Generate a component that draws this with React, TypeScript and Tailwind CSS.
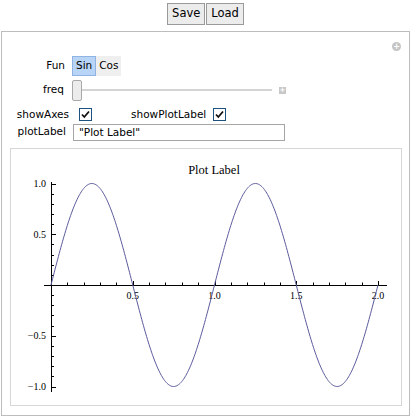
import React from 'react';

const font = { fontFamily: '"DejaVu Sans", Tahoma, sans-serif' };

// plot geometry, relative to the plot panel
const X0 = 40;
const Y0 = 136;
const SX = 163.5;
const SY = 101.5;

function sinePath() {
  const pts: string[] = [];
  for (let i = 0; i <= 400; i++) {
    const x = (i / 400) * 2;
    const px = X0 + x * SX;
    const py = Y0 - Math.sin(2 * Math.PI * x) * SY;
    pts.push(`${i === 0 ? 'M' : 'L'}${px.toFixed(2)},${py.toFixed(2)}`);
  }
  return pts.join(' ');
}

function Plot() {
  const xTicks = Array.from({ length: 21 }, (_, i) => i / 10);
  const yTicks = Array.from({ length: 21 }, (_, i) => -1 + i / 10);
  return (
    <svg width="390" height="256" className="block">
      <text x="203" y="25" textAnchor="middle" fontFamily='"Liberation Serif", serif' fontSize="12.5" fill="#000">
        Plot Label
      </text>
      {/* axes */}
      <line x1="33" y1={Y0 + 0.5} x2="376" y2={Y0 + 0.5} stroke="#000" strokeWidth="1" />
      <line x1={X0 + 0.5} y1="33" x2={X0 + 0.5} y2="243" stroke="#000" strokeWidth="1" />
      {xTicks.map((t, i) => {
        if (i === 0) return null;
        const px = Math.round(X0 + t * SX) + 0.5;
        const major = i % 5 === 0;
        return <line key={'x' + i} x1={px} y1={Y0} x2={px} y2={Y0 - (major ? 4 : 2.5)} stroke="#000" strokeWidth="1" />;
      })}
      {yTicks.map((t, i) => {
        if (i === 10) return null;
        const py = Math.round(Y0 - t * SY) + 0.5;
        const major = i % 5 === 0;
        return <line key={'y' + i} x1={X0} y1={py} x2={X0 + (major ? 5 : 3)} y2={py} stroke="#000" strokeWidth="1" />;
      })}
      {['0.5', '1.0', '1.5', '2.0'].map((l, i) => (
        <text key={l} x={X0 + (i + 1) * 0.5 * SX} y="150" textAnchor="middle" fontFamily='"Liberation Serif", serif' fontSize="10" fill="#000">
          {l}
        </text>
      ))}
      {[
        ['1.0', 1],
        ['0.5', 0.5],
        ['\u22120.5', -0.5],
        ['\u22121.0', -1],
      ].map(([l, v]) => (
        <text key={l as string} x="35" y={Y0 - (v as number) * SY + 3.5} textAnchor="end" fontFamily='"Liberation Serif", serif' fontSize="10" fill="#000">
          {l}
        </text>
      ))}
      <path d={sinePath()} fill="none" stroke="#5a5a9c" strokeWidth="1" />
    </svg>
  );
}

function Check() {
  return (
    <span className="flex h-[13px] w-[13px] items-center justify-center border border-[#1c5180] bg-white">
      <svg width="9" height="9" viewBox="0 0 9 9">
        <path d="M1 4.5 L3.3 7 L8 1.5" fill="none" stroke="#111" strokeWidth="1.8" />
      </svg>
    </span>
  );
}

function App() {
  return (
    <div className="h-[419px] w-[411px] bg-white text-[10.5px] text-black" style={font}>
      {/* Save / Load */}
      <div className="flex justify-center gap-px pt-[3px]">
        <button className="h-[22px] border border-[#9a9a9a] bg-[#ececec] px-[4px] text-[11.5px] leading-none">Save</button>
        <button className="h-[22px] border border-[#9a9a9a] bg-[#ececec] px-[4px] text-[11.5px] leading-none">Load</button>
      </div>

      {/* Manipulate panel */}
      <div className="relative ml-px mt-[6px] h-[385px] w-[409px] border border-[#bdbdbd] bg-white">
        <span className="absolute right-[8px] top-[10px] flex h-[9px] w-[9px] items-center justify-center rounded-full bg-[#c4c4c4]">
          <span className="text-[8px] font-bold leading-none text-white">+</span>
        </span>

        <div className="flex flex-col pt-[24px]">
          <div className="flex h-[20px] items-center">
            <span className="w-[63px] text-right">Fun</span>
            <div className="ml-[7px] flex h-[20px]">
              <span className="flex items-center border border-[#8fb4e3] bg-[#b8d4f6] px-[3px]">Sin</span>
              <span className="flex items-center bg-[#efefef] px-[3px]">Cos</span>
            </div>
          </div>

          <div className="mt-[3px] flex h-[22px] items-center">
            <span className="w-[62px] text-right">freq</span>
            <div className="ml-[8px] flex items-center">
              <span className="h-[21px] w-[10px] rounded-[2px] border border-[#a8a8a8] bg-[#ececec]" />
              <span className="h-[2px] w-[190px] bg-[#d4d4d4]" />
              <span className="ml-[7px] flex h-[7px] w-[7px] items-center justify-center bg-[#c8c8c8] text-[7px] font-bold leading-none text-white">+</span>
            </div>
          </div>

          <div className="mt-[6px] flex h-[15px] items-center">
            <span className="w-[67px] text-right">showAxes</span>
            <span className="ml-[10px]">
              <Check />
            </span>
            <span className="ml-[39px]">showPlotLabel</span>
            <span className="ml-[7px]">
              <Check />
            </span>
          </div>

          <div className="mt-[1px] flex h-[18px] items-center">
            <span className="w-[64px] text-right">plotLabel</span>
            <input
              readOnly
              value={'"Plot Label"'}
              className="ml-[7px] h-[17px] w-[212px] border border-[#a5a5a5] px-[5px] text-[10.5px] outline-none"
              style={font}
            />
          </div>

          <div className="ml-[8px] mt-[7px] h-[258px] w-[392px] border border-[#d6d6d6] bg-white">
            <Plot />
          </div>
        </div>
      </div>
    </div>
  );
}

export default App;
